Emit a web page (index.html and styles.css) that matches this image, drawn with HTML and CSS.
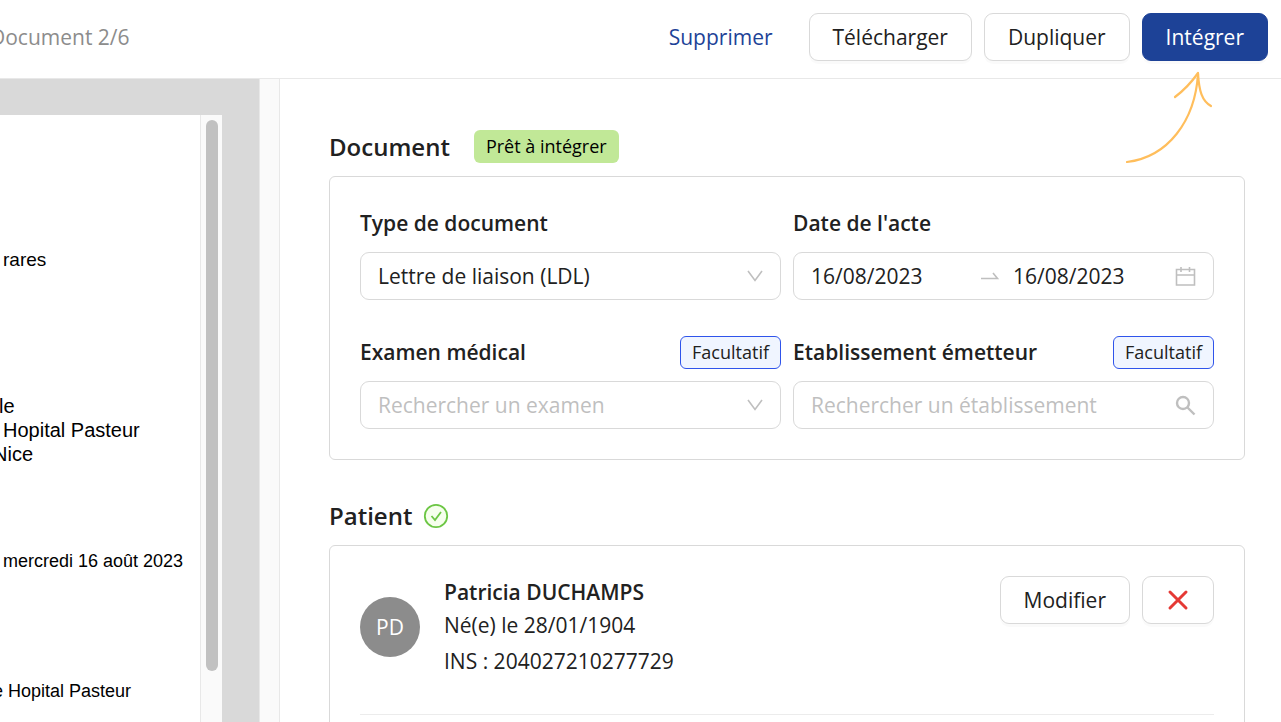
FILE: index.html
```html
<!DOCTYPE html>
<html lang="fr">
<head>
<meta charset="utf-8">
<title>Document 2/6</title>
<link rel="stylesheet" href="styles.css">
</head>
<body>
<header class="topbar">
  <div class="topbar-title">Document 2/6</div>
  <div class="actions">
    <button class="btn btn-link" type="button">Supprimer</button>
    <button class="btn" type="button">Télécharger</button>
    <button class="btn" type="button">Dupliquer</button>
    <button class="btn btn-primary" type="button">Intégrer</button>
  </div>
  <svg class="hint-arrow" viewBox="0 0 90 94" aria-hidden="true">
    <path d="M3 91C44 86 71 50 74 3"/>
    <path d="M51 26C59 20 67 12 74 2C75 20 78 30 87 35"/>
  </svg>
</header>
<main class="workspace">
  <section class="viewer" aria-label="Aperçu">
    <div class="sheet">
      <p class="line line-rares">rares</p>
      <div class="address">
        <p class="line line-cut-s">le</p>
        <p class="line">Hopital Pasteur</p>
        <p class="line line-cut">Nice</p>
      </div>
      <p class="line line-small line-date">mercredi 16 août 2023</p>
      <p class="line line-small line-cut">e Hopital Pasteur</p>
    </div>
    <div class="track"><div class="thumb"></div></div>
  </section>
  <div class="splitter"></div>
  <section class="panel">
    <section class="group">
      <div class="group-head">
        <h2>Document</h2>
        <span class="tag tag-ready">Prêt à intégrer</span>
      </div>
      <div class="card fields">
        <div class="field">
          <div class="field-head"><label for="type">Type de document</label></div>
          <div class="control">
            <select id="type"><option>Lettre de liaison (LDL)</option></select>
            <svg class="chevron" viewBox="0 0 16 12" aria-hidden="true"><path d="M1 1L8 10.500L15 1"/></svg>
          </div>
        </div>
        <div class="field">
          <div class="field-head"><label for="from">Date de l'acte</label></div>
          <div class="control">
            <input id="from" type="text" value="16/08/2023">
            <svg class="range" viewBox="0 0 20 12" aria-hidden="true"><path d="M1 8.500H17.500L13 3"/></svg>
            <input type="text" value="16/08/2023" aria-label="Date de fin">
            <svg class="icon" viewBox="0 0 21 21" aria-hidden="true"><path d="M1.500 3.500H19.500V19H1.500ZM1.500 9H19.500M6 1V6M14.500 1V6"/></svg>
          </div>
        </div>
        <div class="field">
          <div class="field-head"><label for="exam">Examen médical</label><span class="tag tag-optional">Facultatif</span></div>
          <div class="control">
            <select id="exam" class="empty"><option>Rechercher un examen</option></select>
            <svg class="chevron" viewBox="0 0 16 12" aria-hidden="true"><path d="M1 1L8 10.500L15 1"/></svg>
          </div>
        </div>
        <div class="field">
          <div class="field-head"><label for="site">Etablissement émetteur</label><span class="tag tag-optional">Facultatif</span></div>
          <div class="control">
            <input id="site" type="text" placeholder="Rechercher un établissement">
            <svg class="icon search" viewBox="0 0 21 21" aria-hidden="true"><circle cx="8" cy="8" r="6"/><path d="M12.500 12.500L19.500 19.500"/></svg>
          </div>
        </div>
      </div>
    </section>
    <section class="group">
      <div class="group-head group-head-tight">
        <h2>Patient</h2>
        <svg class="valid" viewBox="0 0 26 26" aria-hidden="true"><circle cx="13" cy="13" r="11.200"/><path d="M8.500 13L12 17L18 9"/></svg>
      </div>
      <div class="card">
        <div class="patient">
          <div class="avatar">PD</div>
          <div class="identity">
            <strong>Patricia DUCHAMPS</strong>
            <span>Né(e) le 28/01/1904</span>
            <span class="ins">INS : 204027210277729</span>
          </div>
          <div class="patient-actions">
            <button class="btn" type="button">Modifier</button>
            <button class="btn" type="button" aria-label="Retirer"><svg class="cross" viewBox="0 0 24 24" aria-hidden="true"><path d="M4 4L20 20M20 4L4 20"/></svg></button>
          </div>
        </div>
      </div>
    </section>
  </section>
</main>
</body>
</html>
```
FILE: styles.css
```css
* { box-sizing: border-box; }

body {
  margin: 0;
  height: 100vh;
  display: flex;
  flex-direction: column;
  overflow: hidden;
  background: #fff;
  color: #212121;
  font: 21px/33px "Open Sans", "Noto Sans", sans-serif;
}

h2, p { margin: 0; }
h2 { font-size: 24px; font-weight: 600; line-height: 33px; }
svg { fill: none; flex: none; display: block; }

.topbar {
  position: relative;
  flex: none;
  display: flex;
  align-items: center;
  justify-content: space-between;
  padding: 13px 13px 17px 0;
  border-bottom: 1px solid #e8e8e8;
}
.topbar-title { margin-left: -10px; color: #8c8c8c; }
.actions, .patient-actions { display: flex; gap: 12px; }

.btn {
  height: 48px;
  padding: 0 23px;
  border: 1px solid #d9d9d9;
  border-radius: 9px;
  background: #fff;
  color: inherit;
  font: inherit;
  box-shadow: 0 3px 0 rgba(0, 0, 0, 0.02);
}
.btn-link { border-color: transparent; background: none; box-shadow: none; color: #1d4297; }
.btn-primary { border-color: #1d4297; background: #1d4297; color: #fff; }

.hint-arrow {
  position: absolute;
  top: 71px;
  right: 67px;
  width: 90px;
  height: 94px;
  stroke: #ffbe5c;
  stroke-width: 2.2;
  stroke-linecap: round;
  stroke-linejoin: round;
}

.workspace { flex: 1; min-height: 0; display: flex; }

.viewer {
  flex: none;
  display: flex;
  padding: 36px 37px 0 0;
  background: #d9d9d9;
}
.sheet {
  width: 200px;
  padding: 133px 0 0 3px;
  overflow: hidden;
  background: #fff;
  color: #000;
  font-family: "Liberation Sans", Arial, sans-serif;
}
.line { font-size: 20px; line-height: 24px; white-space: nowrap; }
.line-small { font-size: 18px; }
.line-rares { font-size: 19px; }
.line-cut { margin-left: -10px; }
.line-cut-s { margin-left: -4px; }
.address { padding: 122px 0 83px; }
.line-date { margin-bottom: 106px; }
.track {
  width: 22px;
  padding: 5px 4px 0 5px;
  border-left: 1px solid #e8e8e8;
  background: #fafafa;
}
.thumb { height: 91.5%; border-radius: 6px; background: #c1c1c1; }
.splitter {
  flex: none;
  width: 21px;
  border: solid #e8e8e8;
  border-width: 0 1px;
  background: #fafafa;
}

.panel {
  flex: 1;
  min-width: 0;
  display: flex;
  flex-direction: column;
  gap: 39px;
  padding: 51px 36px 0 49px;
}
.group { display: flex; flex-direction: column; gap: 13px; }
.group-head { display: flex; align-items: center; gap: 24px; height: 33px; }
.group-head-tight { gap: 11px; }

.tag { padding: 0 12px; border-radius: 6px; font-size: 18px; line-height: 33px; }
.tag-ready { background: #c1e897; color: #000; }
.tag-optional {
  padding: 0 11px;
  border: 1px solid #2f54eb;
  background: #f0f5ff;
  line-height: 31px;
}

.card { padding: 30px; border: 1px solid #d9d9d9; border-radius: 6px; }
.fields { display: grid; grid-template-columns: 1fr 1fr; gap: 36px 12px; }
.field { display: flex; flex-direction: column; gap: 12px; min-width: 0; }
.field-head {
  display: flex;
  align-items: center;
  justify-content: space-between;
  height: 33px;
  font-weight: 600;
}
.field-head .tag { font-weight: 400; }

.control {
  display: flex;
  align-items: center;
  height: 48px;
  padding: 0 17px;
  border: 1px solid #d9d9d9;
  border-radius: 9px;
  background: #fff;
}
.control input, .control select {
  flex: 1;
  width: 0;
  min-width: 0;
  height: 46px;
  padding: 0;
  border: 0;
  outline: 0;
  appearance: none;
  background: none;
  color: inherit;
  font: inherit;
}
.control input::placeholder, .control .empty { color: #bfbfbf; opacity: 1; }
.control svg { stroke: #bfbfbf; stroke-width: 1.6; }
.chevron { width: 16px; height: 12px; }
.range { width: 20px; height: 12px; margin: 0 13px; }
.icon { width: 21px; height: 21px; margin-left: 6px; }
.control .search { stroke-width: 2.4; }

.valid { width: 26px; height: 26px; stroke: #6cc644; stroke-width: 1.8; }
.valid circle { fill: #f6ffed; }

.patient {
  display: flex;
  align-items: center;
  padding-bottom: 36px;
  margin-bottom: 36px;
  border-bottom: 1px solid #ececec;
}
.avatar {
  width: 60px;
  height: 60px;
  margin-right: 24px;
  border-radius: 50%;
  background: #8c8c8c;
  color: #fff;
  line-height: 60px;
  text-align: center;
}
.identity { flex: 1; display: flex; flex-direction: column; }
.identity strong { font-weight: 600; }
.identity .ins { margin-top: 3px; }
.patient-actions { align-self: flex-start; }
.cross { width: 24px; height: 24px; stroke: #e53935; stroke-width: 3; stroke-linecap: round; }
```
